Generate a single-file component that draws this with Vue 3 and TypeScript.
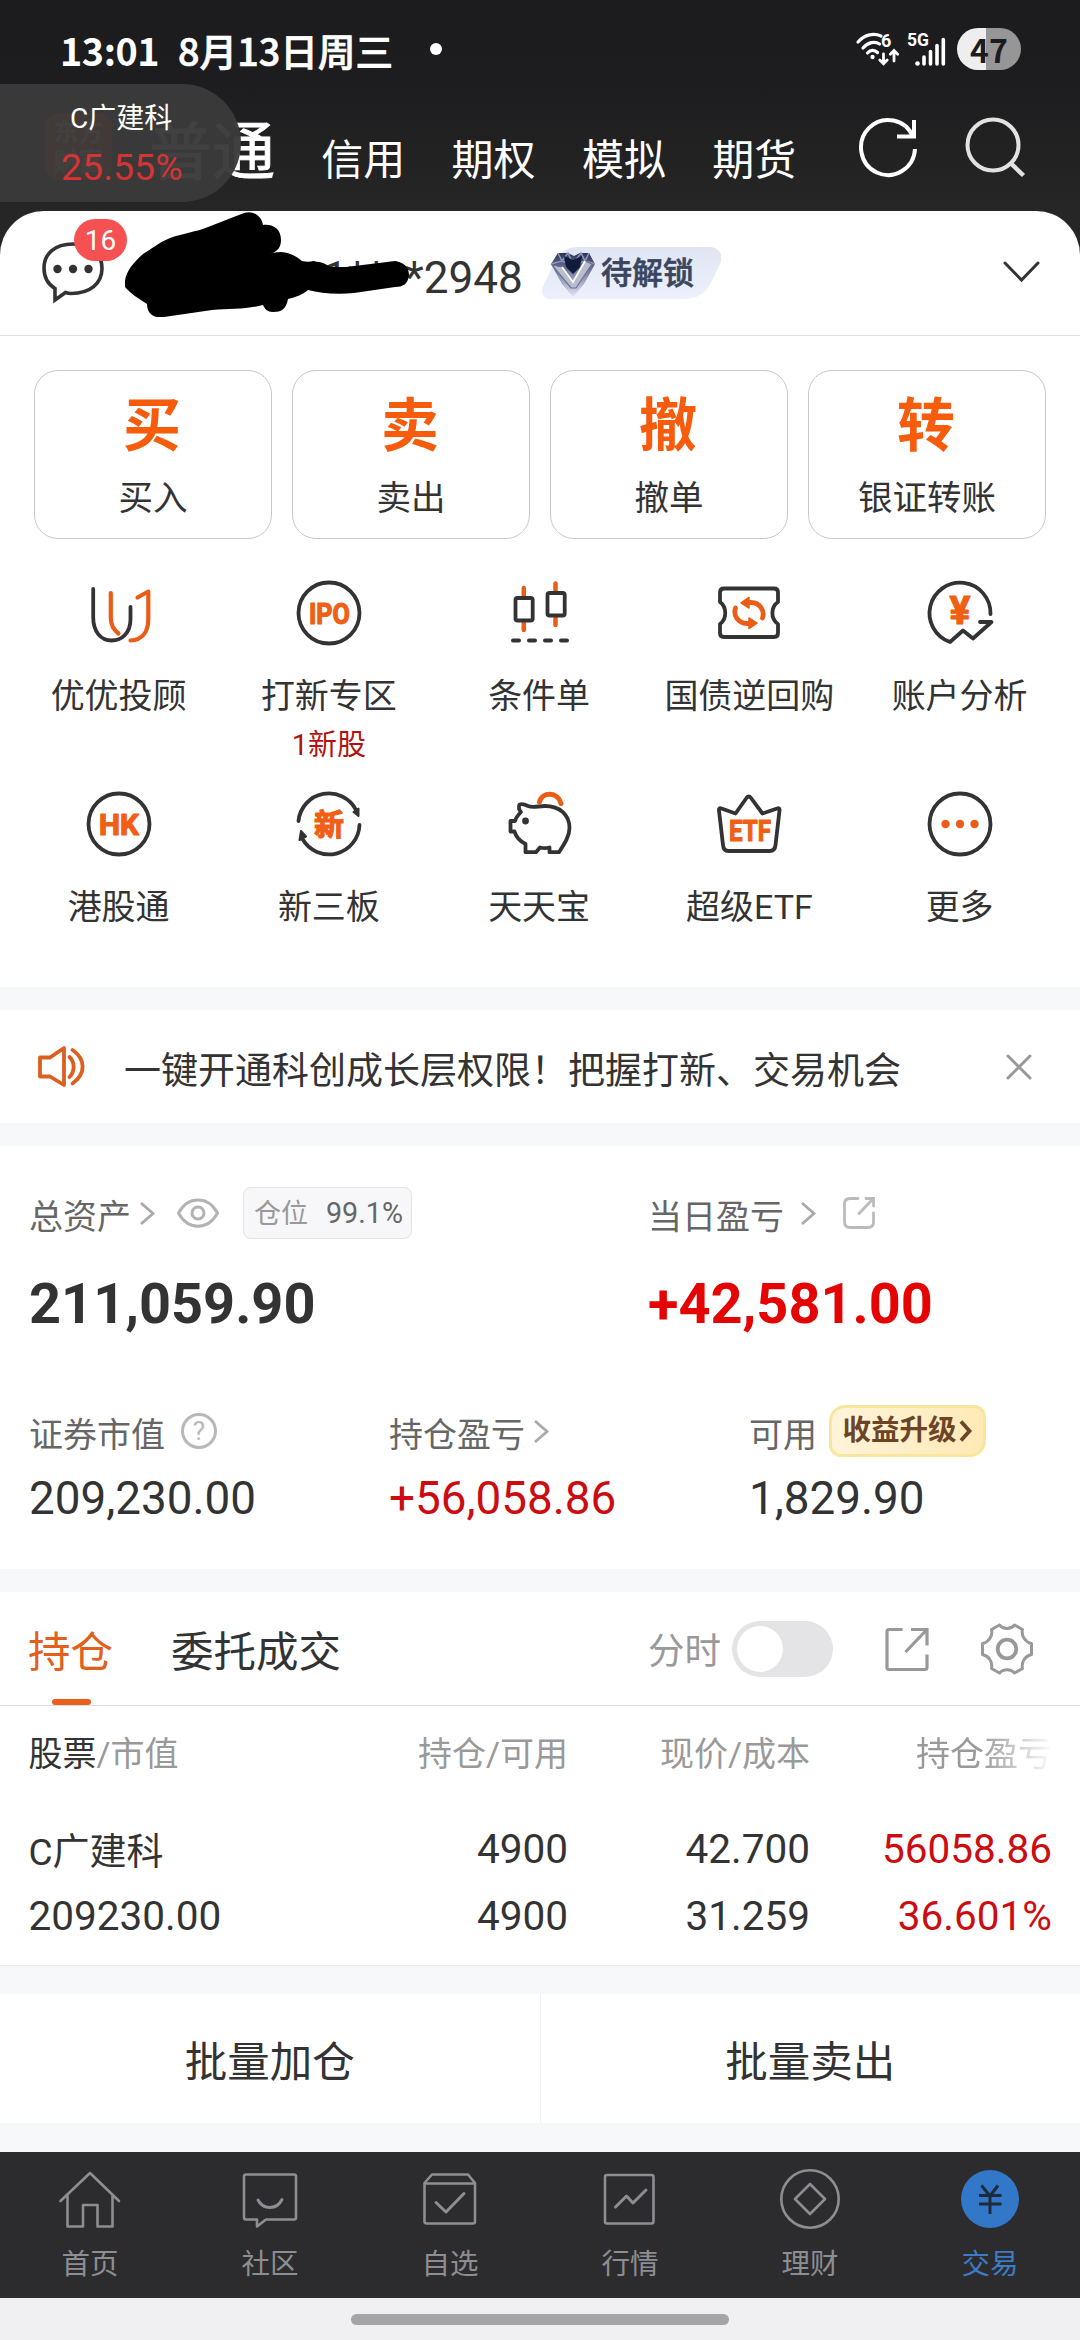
<script setup lang="ts">
interface Shortcut {
  key: string
  label: string
  note?: string
}

const accountTabs: string[] = ['信用', '期权', '模拟', '期货']

const mainActions: { glyph: string; label: string }[] = [
  { glyph: '买', label: '买入' },
  { glyph: '卖', label: '卖出' },
  { glyph: '撤', label: '撤单' },
  { glyph: '转', label: '银证转账' },
]

const shortcuts: Shortcut[] = [
  { key: 'advisor', label: '优优投顾' },
  { key: 'ipo', label: '打新专区', note: '1新股' },
  { key: 'condition', label: '条件单' },
  { key: 'repo', label: '国债逆回购' },
  { key: 'analysis', label: '账户分析' },
  { key: 'hk', label: '港股通' },
  { key: 'neeq', label: '新三板' },
  { key: 'pig', label: '天天宝' },
  { key: 'etf', label: '超级ETF' },
  { key: 'more', label: '更多' },
]

const navItems: { key: string; label: string; active?: boolean }[] = [
  { key: 'home', label: '首页' },
  { key: 'community', label: '社区' },
  { key: 'watch', label: '自选' },
  { key: 'market', label: '行情' },
  { key: 'wealth', label: '理财' },
  { key: 'trade', label: '交易', active: true },
]
</script>

<template>
  <div class="screen" lang="zh-CN">
    <header class="top">
      <div class="status">
        <span class="clock">13:01</span>
        <span class="date">8月13日周三</span>
        <i class="dot"></i>
        <svg class="signals" width="94" height="40" viewBox="0 0 94 40" fill="none" stroke="#fff" stroke-linecap="round">
          <path d="M3 13C10 5 19 4 26 7" stroke-width="3.2" />
          <path d="M8 19C13 13 20 12 24.500 15" stroke-width="3.200" />
          <path d="M12.500 24C15.500 20.500 19.500 20.500 22.500 23.500" stroke-width="3.200" />
          <circle cx="17.500" cy="28" r="2.200" fill="#fff" stroke="none" />
          <path d="M28.500 25V34M24.800 31L28.500 34.800L32.200 31M39 32V22M35.300 25.200L39 21.500L42.700 25.200" stroke-width="2.800" />
          <text x="26" y="18" class="sig-text" font-size="18">6</text>
          <text x="52" y="17" class="sig-text" font-size="18" textLength="22" lengthAdjust="spacingAndGlyphs">5G</text>
          <path d="M69 28V35M75.500 22.500V35M82 16.500V35M88.300 10.500V35" stroke-width="3.600" />
          <circle cx="62.500" cy="34.500" r="2.300" fill="#fff" stroke="none" />
        </svg>
        <span class="battery">47</span>
      </div>
      <nav class="modes">
        <span class="brand"><b>东方</b><b>财富</b></span>
        <span class="mode-main">普通</span>
        <span v-for="tab in accountTabs" :key="tab" class="mode">{{ tab }}</span>
        <svg class="refresh" width="64" height="64" viewBox="0 0 64 64" fill="none" stroke="#fff" stroke-width="4">
          <path d="M59 34A27 27.500 0 1 1 57 22" />
          <path d="M58 5V21.500H41" />
        </svg>
        <svg class="search" width="64" height="64" viewBox="0 0 64 64" fill="none" stroke="#e2e2e2" stroke-width="4">
          <circle cx="30" cy="29" r="25.500" />
          <path d="M47.500 47L60.500 59.500" stroke-width="4.500" />
        </svg>
      </nav>
      <div class="floating">
        <span class="floating-name">C广建科</span>
        <span class="floating-rate">25.55%</span>
      </div>
    </header>

    <main class="panel">
      <section class="account">
        <span class="chat">
          <svg width="66" height="66" viewBox="0 0 66 66" fill="none" stroke="#333" stroke-width="3.600">
            <path d="M15 49.500C7.500 45 4 37.500 4 29C4 14.500 15 5 33 5S62 14.500 62 29.500S50 54.500 31 54.500C29 54.500 27 54 25.500 53.500L15 61Z" stroke-linejoin="miter" />
            <g fill="#333" stroke="none">
              <circle cx="17.500" cy="30" r="4.200" /><circle cx="33" cy="30" r="4.200" /><circle cx="48.500" cy="30" r="4.200" />
            </g>
          </svg>
          <em class="unread">16</em>
        </span>
        <span class="number">*1****2948
          <svg class="scribble" width="286" height="106" viewBox="0 0 286 106">
            <path d="M1 70C2 60 10 51 19 43C28 38 32 33 46 27C60 22 72 21 84 16L120 2C130 -1 138 6 139 14C148 13 157 17 157 29C157 38 152 41 144 44C154 39 166 40 178 50C186 52 194 48 203 54L207 56H222L263 51C276 48 285 54 285 64C284 73 279 76 271 76L230 82C212 84 196 82 184 79C178 84 172 86 164 88C162 98 158 101 149 101C143 101 141 98 139 94C125 98 106 98 88 99L40 106C28 108 23 101 23 93C15 88 6 82 1 76Z" />
          </svg>
        </span>
        <span class="unlock">
          <svg class="unlock-bg" width="180" height="52" viewBox="0 0 180 52">
            <defs>
              <linearGradient id="unlockFill" x1="0" y1="0" x2="0" y2="1">
                <stop offset="0" stop-color="#dfe5f2" /><stop offset="1" stop-color="#edf1fd" />
              </linearGradient>
              <linearGradient id="gem" x1="0" y1="0" x2="0" y2="1">
                <stop offset="0" stop-color="#2b3553" /><stop offset=".55" stop-color="#8d94b8" /><stop offset="1" stop-color="#e6e6f0" />
              </linearGradient>
            </defs>
            <path d="M38 0H168C178 0 183 8 179 17L171 34C165 46 157 52 142 52H10C1 52 -1 45 3 37L14 15C19 5 26 0 38 0Z" fill="url(#unlockFill)" />
            <path d="M17 6H27L33 9L39 6H48L54 17L43 37L32 50L21 37L10 17Z" fill="url(#gem)" />
            <path d="M17 6L21 14L27 6L32 17L40 6L44 14L48 6M10 17L21 14L32 18L44 14L54 17" fill="none" stroke="#8a97bd" stroke-width="1.500" />
            <path d="M23 9L32 13L41 9L39 20L32 27L25 20Z" fill="#101b3c" />
            <path d="M11 18L21 20L32 35L44 14L51 17L35 41H30Z" fill="#b9bccb" stroke="#6a7193" stroke-width="1.200" />
            <path d="M21 20L32 35L44 14" fill="none" stroke="#fff" stroke-width="1.800" />
          </svg>
          <b>待解锁</b>
        </span>
        <svg class="expand" width="40" height="28" viewBox="0 0 40 28" fill="none" stroke="#333" stroke-width="3" stroke-linecap="round">
          <path d="M4 5L20.500 22L37 5" />
        </svg>
      </section>

      <section class="actions">
        <button v-for="a in mainActions" :key="a.glyph" class="action">
          <strong>{{ a.glyph }}</strong>
          <span>{{ a.label }}</span>
        </button>
      </section>

      <section class="shortcuts">
        <div v-for="s in shortcuts" :key="s.key" class="shortcut">
          <svg class="icon" width="72" height="72" viewBox="0 0 72 72" fill="none" stroke="#333" stroke-width="3.800" stroke-linecap="round" stroke-linejoin="round">
            <template v-if="s.key === 'advisor'">
              <path d="M10.200 12V40C10.200 55 18 63.500 28.500 63.500S47.500 56 47.500 42V30" />
              <path class="o" d="M27.800 16V41C27.800 48 31 53 35.500 56.500" stroke-width="4.200" />
              <path class="o" d="M47.500 63.500C60 63 65.300 54 65.300 42V14.500L54.500 20.500" stroke-width="4.200" />
            </template>
            <template v-else-if="s.key === 'ipo'">
              <circle cx="36" cy="36" r="30.500" />
              <text class="ot" x="16" y="46.500" font-size="29" textLength="41" lengthAdjust="spacingAndGlyphs">IPO</text>
            </template>
            <template v-else-if="s.key === 'condition'">
              <path class="o" d="M20.800 11V19M20.800 46V53M52.500 6.500V14M52.500 41V48" stroke-width="4.500" />
              <rect x="12.500" y="21" width="17.200" height="22.500" rx="2" />
              <rect x="44.500" y="16" width="17.200" height="22.500" rx="2" />
              <path d="M10 63.500H16M26 63.500H32M42 63.500H48M58 63.500H64" stroke-width="4" />
            </template>
            <template v-else-if="s.key === 'repo'">
              <path d="M11 11.500H61Q65 11.500 65 15.500V25C57.500 30 57.500 42 65 47V56Q65 60 61 60H11Q7 60 7 56V47C14 42 14 30 7 25V15.500Q7 11.500 11 11.500Z" />
              <path class="o" d="M22.500 31C20 38 25 46.500 34 46.500H37M49.500 41C52 34 47 25.500 38 25.500H35" stroke-width="4.800" />
              <path d="M28 25.800L36 20.500V31ZM44 46.200L36 41V51.500Z" fill="#ea5d17" class="o" stroke-width="1.500" />
            </template>
            <template v-else-if="s.key === 'analysis'">
              <path d="M66.500 37A30.500 30.500 0 1 0 26 65L39 53.500L49 61.500L67.500 45H56" />
              <text class="ot yen" x="36" y="47" font-size="39" text-anchor="middle">¥</text>
            </template>
            <template v-else-if="s.key === 'hk'">
              <circle cx="36" cy="36" r="30.500" />
              <text class="ot" x="16" y="46.500" font-size="29" textLength="40" lengthAdjust="spacingAndGlyphs">HK</text>
            </template>
            <template v-else-if="s.key === 'neeq'">
              <path d="M5.500 33A30.500 30.500 0 0 1 63 22M66.500 37A30.500 30.500 0 0 1 9.500 51" />
              <path d="M60.500 24L65.500 20.500V28ZM6.500 52L8 43L13 48.500Z" fill="#333" stroke-width="2" />
              <text class="ot cjk" x="36" y="46.500" font-size="30" text-anchor="middle">新</text>
            </template>
            <template v-else-if="s.key === 'pig'">
              <path d="M25 18C30 20 35 18 42 18C57 18 66.500 27 66.500 40C66.500 48 62 55 56 64.200H46.500V59.500C42 60.500 39 60 37 59.500L33 64.200H22.500V56C16.500 53 13 49 11.500 43.500H7.500V33H12C13 29 15 27 18 24C16 22 15.500 19 16.500 16.500C19 15.800 22 16.500 25 18Z" />
              <path class="o" d="M36.500 14C39 3.500 55 3.500 58 15.500" stroke-width="5" />
              <circle cx="22.500" cy="33" r="3.400" fill="#333" stroke="none" />
            </template>
            <template v-else-if="s.key === 'etf'">
              <path d="M6 22.500Q5.500 19.500 8.500 20.500L22.500 25.500L33.500 10Q35.800 7 38 10L49.500 25.500L64 20.500Q67 19.500 66.500 22.500L62.500 57Q62 63 56.500 63H15.500Q10.500 63 10 57Z" />
              <text class="ot" x="16" y="52.500" font-size="29.500" textLength="42" lengthAdjust="spacingAndGlyphs">ETF</text>
            </template>
            <template v-else>
              <circle cx="36" cy="36" r="30.500" />
              <g fill="#ea5d17" stroke="none"><circle cx="21.500" cy="36" r="4.200" /><circle cx="36" cy="36" r="4.200" /><circle cx="50.500" cy="36" r="4.200" /></g>
            </template>
          </svg>
          <span class="shortcut-label">{{ s.label }}</span>
          <small v-if="s.note">{{ s.note }}</small>
        </div>
      </section>
    </main>

    <section class="notice">
      <svg width="50" height="46" viewBox="0 0 50 46" fill="none" stroke="#dd5f20" stroke-width="3.800" stroke-linejoin="round" stroke-linecap="round">
        <path d="M4 13.500H14L28 4V41L14 32.500H4Z" />
        <path d="M33.500 13C39 18 39 27 33.500 33M36.500 6C50 15 50 30 36.500 39.500" />
      </svg>
      <span>一键开通科创成长层权限！把握打新、交易机会</span>
      <svg class="close" width="30" height="30" viewBox="0 0 30 30" stroke="#999" stroke-width="3" stroke-linecap="round">
        <path d="M4 4L26 26M26 4L4 26" />
      </svg>
    </section>

    <section class="assets">
      <div class="asset-main">
        <div class="cell wide">
          <div class="cap">
            <span>总资产</span>
            <svg class="arrow" width="20" height="28" viewBox="0 0 20 28"><path d="M4 4L16 14.500L4 25" /></svg>
            <svg class="eye" width="44" height="32" viewBox="0 0 44 32" fill="none" stroke="#b3b3b3" stroke-width="3">
              <path d="M2.500 16C12 -1.500 32 -1.500 41.500 16C32 33.500 12 33.500 2.500 16Z" /><circle cx="22" cy="16" r="6" />
            </svg>
            <span class="position"><em>仓位</em>99.1%</span>
          </div>
          <div class="total">211,059.90</div>
        </div>
        <div class="cell">
          <div class="cap">
            <span>当日盈亏</span>
            <svg class="arrow day" width="20" height="28" viewBox="0 0 20 28"><path d="M4 4L16 14.500L4 25" /></svg>
            <svg class="share" width="36" height="36" viewBox="0 0 36 36" fill="none" stroke="#bbb" stroke-width="2.800" stroke-linecap="round">
              <path d="M17 3.500H9Q3.500 3.500 3.500 9V27Q3.500 32.500 9 32.500H27Q32.500 32.500 32.500 27V18M25 3.500H32.500V11M32 4L18 18.500" />
            </svg>
          </div>
          <div class="total up">+42,581.00</div>
        </div>
      </div>
      <div class="asset-sub">
        <div class="cell third">
          <div class="cap">
            <span>证券市值</span>
            <span class="help">?</span>
          </div>
          <div class="value">209,230.00</div>
        </div>
        <div class="cell third">
          <div class="cap">
            <span>持仓盈亏</span>
            <svg class="arrow" width="20" height="28" viewBox="0 0 20 28"><path d="M4 4L16 14.500L4 25" /></svg>
          </div>
          <div class="value up">+56,058.86</div>
        </div>
        <div class="cell">
          <div class="cap">
            <span>可用</span>
            <span class="upgrade">收益升级<svg width="14" height="24" viewBox="0 0 14 24" fill="none" stroke="#6b4526" stroke-width="3.800"><path d="M2 2.500L10.500 12L2 21.500" /></svg></span>
          </div>
          <div class="value">1,829.90</div>
        </div>
      </div>
    </section>

    <section class="holdings">
      <div class="tabs">
        <span class="tab active">持仓<i></i></span>
        <span class="tab">委托成交</span>
        <span class="intraday">分时</span>
        <span class="toggle"><i></i></span>
        <svg class="open" width="48" height="48" viewBox="0 0 48 48" fill="none" stroke="#999" stroke-width="3.200">
          <path d="M19.500 4.500H6Q4 4.500 4 6.500V42.500Q4 44.500 6 44.500H42Q44 44.500 44 42.500V29.500M28 4.500H44V20.500M43.500 5L22.500 27" />
        </svg>
        <svg class="gear" width="54" height="54" viewBox="0 0 54 54" fill="none" stroke="#999" stroke-width="3" stroke-linejoin="round">
          <path d="M19.500 3C23 7.500 31 7.500 34.500 3L42.500 7.500C41 13.500 45 20 51.500 21.500V32.500C45 34 41 40.500 42.500 46.500L34.500 51C31 46.500 23 46.500 19.500 51L11.500 46.500C13 40.500 9 34 2.500 32.500V21.500C9 20 13 13.500 11.500 7.500Z" />
          <circle cx="27" cy="27" r="9.300" stroke-width="3.800" />
        </svg>
      </div>
      <div class="row head">
        <span class="c1"><b>股票</b>/市值</span>
        <span class="c2">持仓/可用</span>
        <span class="c3">现价/成本</span>
        <span class="c4 fade">持仓盈亏</span>
      </div>
      <div class="row first">
        <span class="c1 name">C广建科</span>
        <span class="c2">4900</span>
        <span class="c3">42.700</span>
        <span class="c4 up">56058.86</span>
      </div>
      <div class="row second">
        <span class="c1">209230.00</span>
        <span class="c2">4900</span>
        <span class="c3">31.259</span>
        <span class="c4 up">36.601%</span>
      </div>
    </section>

    <section class="batch">
      <button>批量加仓</button>
      <button>批量卖出</button>
    </section>

    <nav class="bottom">
      <div v-for="n in navItems" :key="n.key" class="nav-item" :class="{ active: n.active }">
        <svg width="64" height="64" viewBox="0 0 64 64" fill="none" stroke="#8e8e92" stroke-width="2.600" stroke-linejoin="round" stroke-linecap="round">
          <template v-if="n.key === 'home'">
            <path d="M2.500 34L32 6L61 34M9.500 28.500V59.500H25V38H39.500V59.500H54.500V28.500" />
          </template>
          <template v-else-if="n.key === 'community'">
            <path d="M8 7.500H56Q58 7.500 58 9.500V50.500Q58 52.500 56 52.500H28L19 59.500V52.500H8Q6 52.500 6 50.500V9.500Q6 7.500 8 7.500Z" />
            <path d="M20 33C25 43 39 43 44 32.500" stroke-width="3" />
          </template>
          <template v-else-if="n.key === 'watch'">
            <path d="M6.500 16V54.500Q6.500 56.500 8.500 56.500H55Q57 56.500 57 54.500V16L50 7.500H14ZM6.500 16.500H57" />
            <path d="M18 35.500L28 45L46 26.500" stroke-width="3" />
          </template>
          <template v-else-if="n.key === 'market'">
            <rect x="7" y="8" width="48.500" height="48.500" rx="2" />
            <path d="M17.500 40L28.500 29L35 36L48 23" stroke-width="3" />
          </template>
          <template v-else-if="n.key === 'wealth'">
            <circle cx="32" cy="32" r="28.700" />
            <path d="M32 17L47 32L32 47L17 32Z" />
          </template>
          <template v-else>
            <circle cx="32" cy="32" r="29" fill="#3277c8" stroke="none" />
            <path d="M23.500 18.500L32 29L40 18.500M21 28.500H43.500M21 37H43.500M32 28V47" stroke="#202a3a" stroke-width="3" stroke-linecap="butt" />
          </template>
        </svg>
        <span>{{ n.label }}</span>
      </div>
    </nav>
    <footer class="gesture"><i></i></footer>
  </div>
</template>

<style>
body {
  margin: 0;
  background: #f7f8fa;
}
</style>

<style scoped>
* {
  box-sizing: border-box;
}
i,
em {
  font-style: normal;
}
button {
  appearance: none;
  border: 0;
  background: none;
  padding: 0;
  margin: 0;
  font: inherit;
  color: inherit;
}
svg {
  display: block;
  flex: none;
}
.screen {
  width: 1080px;
  height: 2340px;
  overflow: hidden;
  display: flex;
  flex-direction: column;
  background: #f7f8fa;
  color: #333;
  font-family: Roboto, 'Noto Sans CJK SC', sans-serif;
  font-weight: 400;
  white-space: nowrap;
}
.up {
  color: #cc0c10;
}

/* header */
.top {
  position: relative;
  flex: none;
  height: 255px;
  margin-bottom: -44px;
  background: linear-gradient(#1c1c1e 0, #1d1d1f 84px, #262626 211px);
  color: #fff;
}
.status {
  height: 84px;
  display: flex;
  align-items: center;
  padding: 14px 59px 0 60px;
  font-family: 'Noto Sans CJK SC', sans-serif;
  font-weight: 700;
  font-size: 37.700px;
  line-height: 44px;
}
.clock {
  width: 118px;
  padding-top: 2px;
  letter-spacing: -0.400px;
}
.date {
  width: 252px;
  padding-top: 2px;
  font-weight: 500;
  -webkit-text-stroke: 0.700px #fff;
}
.dot {
  width: 12px;
  height: 12px;
  border-radius: 50%;
  background: #fff;
}
.signals {
  margin: 0 0 0 413px;
}
.sig-text {
  fill: #fff;
  stroke: none;
  font-family: Roboto, sans-serif;
  font-weight: 700;
}
.battery {
  flex: none;
  width: 64px;
  height: 42px;
  margin-left: 8px;
  border-radius: 21px;
  background: linear-gradient(90deg, #eee 29px, #969696 29px);
  color: #1c1c1e;
  font: 700 32px/42px 'Noto Sans CJK SC', sans-serif;
  text-align: center;
}
.modes {
  height: 127px;
  display: flex;
  align-items: flex-start;
  padding-left: 45px;
}
.brand {
  width: 67px;
  height: 67px;
  margin-top: 29px;
  border-radius: 14px;
  background: #e8421f;
  display: flex;
  flex-direction: column;
  align-items: center;
  justify-content: center;
  font-size: 25px;
  line-height: 29px;
}
.mode-main {
  margin: 34px 0 0 37px;
  font-size: 63px;
  line-height: 70px;
  font-weight: 400;
  -webkit-text-stroke: 0.900px #fff;
}
.mode {
  width: 84px;
  margin: 52px 0 0 46.300px;
  font-size: 42px;
  line-height: 50px;
}
.refresh {
  margin: 31px 0 0 60px;
}
.search {
  margin: 32px 0 0 43px;
}
.floating {
  position: absolute;
  left: 0;
  top: 84px;
  width: 241px;
  height: 118px;
  padding: 17px 0 0 0;
  border-radius: 0 59px 59px 0;
  background: rgba(58, 58, 58, 0.965);
  display: flex;
  flex-direction: column;
}
.floating-name {
  padding-left: 70px;
  font-size: 28px;
  line-height: 36px;
}
.floating-rate {
  padding-left: 61px;
  margin-top: 8px;
  font-size: 37.500px;
  line-height: 44px;
  color: #d53434;
}

/* account panel */
.panel {
  position: relative;
  flex: none;
  height: 776px;
  border-radius: 44px 44px 0 0;
  background: #fff;
}
.account {
  height: 125px;
  display: flex;
  align-items: flex-start;
  padding-left: 40px;
  border-bottom: 1px solid #dedede;
}
.chat {
  position: relative;
  width: 66px;
  margin-top: 28px;
}
.unread {
  position: absolute;
  left: 34px;
  top: -20px;
  width: 53px;
  height: 42px;
  border-radius: 21px;
  background: #f55152;
  color: #fff;
  font-size: 28px;
  line-height: 44px;
  text-align: center;
}
.number {
  position: relative;
  width: 220px;
  margin: 41px 0 0 198px;
  font-size: 44.100px;
  line-height: 52px;
}
.scribble {
  position: absolute;
  left: -180px;
  top: -41px;
}
.unlock {
  position: relative;
  width: 180px;
  height: 52px;
  margin: 36px 0 0 17px;
}
.unlock-bg {
  position: absolute;
  inset: 0;
}
.unlock b {
  position: relative;
  display: block;
  padding-left: 60px;
  font-size: 31px;
  line-height: 54px;
  font-weight: 500;
  -webkit-text-stroke: 0.600px #3b4560;
  color: #3b4560;
}
.expand {
  margin: 47px 0 0 280px;
}
.actions {
  display: flex;
  gap: 20.500px;
  padding: 34px 34px 0 34.300px;
}
.action {
  width: 237.500px;
  height: 169px;
  border: 1px solid #c9c9c9;
  border-radius: 24px;
  display: flex;
  flex-direction: column;
  align-items: center;
}
.action strong {
  margin-top: 22px;
  margin-right: 2px;
  font-size: 58px;
  line-height: 66px;
  font-weight: 700;
  color: #f75c0c;
}
.action span {
  margin-top: 18px;
  font-size: 34.500px;
  line-height: 42px;
}
.shortcuts {
  display: grid;
  grid-template-columns: repeat(5, 210.250px);
  grid-auto-rows: 210.500px;
  padding: 38px 0 0 13.500px;
}
.shortcut {
  display: flex;
  flex-direction: column;
  align-items: center;
}
.shortcut-label {
  margin-top: 26px;
  font-size: 34px;
  line-height: 42px;
}
.shortcut small {
  margin-top: 10px;
  font-size: 29px;
  line-height: 36px;
  color: #b3130f;
}
.o {
  stroke: #ea5d17;
}
.ot {
  fill: #f05f14;
  stroke: #f05f14;
  stroke-width: 1.200px;
  font-family: Roboto, sans-serif;
  font-weight: 700;
}
.cjk {
  font-family: 'Noto Sans CJK SC', sans-serif;
}

/* notice */
.notice {
  flex: none;
  height: 113px;
  margin-top: 23px;
  padding-left: 36px;
  display: flex;
  align-items: center;
  background: #fff;
}
.notice span {
  width: 790px;
  margin-left: 38px;
  padding-top: 10px;
  font-size: 37px;
  line-height: 44px;
}
.close {
  margin-left: 90px;
}

/* assets */
.assets {
  flex: none;
  height: 423px;
  margin-top: 23px;
  padding: 39px 0 0 29px;
  background: #fff;
}
.asset-main,
.asset-sub {
  display: flex;
}
.asset-sub {
  margin-top: 66px;
}
.wide {
  width: 619px;
}
.third {
  width: 360px;
}
.cap {
  height: 56px;
  display: flex;
  align-items: center;
  color: #666;
  font-size: 34px;
  line-height: 42px;
}
.cap > span:first-child {
  padding-top: 8px;
}
.arrow {
  margin-left: 6px;
  fill: none;
  stroke: #aaa;
  stroke-width: 2.800px;
}
.arrow.day {
  margin-left: 14px;
}
.eye {
  margin-left: 19px;
}
.position {
  width: 169px;
  height: 52px;
  margin-left: 23px;
  padding-left: 10px;
  border: 1px solid #e4e4e6;
  border-radius: 8px;
  background: #f7f7fa;
  font-size: 28.700px;
  line-height: 50px;
}
.position em {
  margin-right: 18px;
  font-size: 27px;
  color: #999;
}
.share {
  margin-left: 23px;
}
.total {
  margin-top: 30px;
  font-size: 55.900px;
  line-height: 66px;
  font-weight: 700;
}
.total.up {
  color: #e40404;
}
.help {
  width: 36px;
  height: 36px;
  margin-left: 16px;
  border: 3px solid #b8b8b8;
  border-radius: 50%;
  color: #b8b8b8;
  font-size: 26px;
  line-height: 31px;
  text-align: center;
}
.upgrade {
  width: 157px;
  height: 52px;
  margin-left: 12px;
  display: flex;
  align-items: center;
  justify-content: center;
  border: 3px solid #f7e79c;
  border-radius: 16px 12px 16px 12px;
  background: linear-gradient(100deg, #fff4dc, #ffe9b4);
  color: #6b4526;
  font-size: 28.500px;
  font-weight: 700;
}
.upgrade svg {
  margin-left: 2px;
}
.value {
  margin-top: 13px;
  font-size: 45.800px;
  line-height: 54px;
}

/* holdings */
.holdings {
  flex: none;
  height: 374px;
  margin-top: 23px;
  border-bottom: 1px solid #ececee;
  background: #fff;
}
.tabs {
  height: 114px;
  display: flex;
  align-items: center;
  padding-left: 28px;
  border-bottom: 1px solid #dcdcdc;
}
.tab {
  position: relative;
  margin-right: 58px;
  padding-top: 8px;
  font-size: 42.500px;
  line-height: 50px;
}
.tab.active {
  color: #e1601b;
}
.tab i {
  position: absolute;
  left: 24px;
  bottom: -27px;
  width: 39px;
  height: 6px;
  border-radius: 3px;
  background: #e9601a;
}
.intraday {
  width: 74px;
  margin-left: 249px;
  padding-top: 7px;
  font-size: 36.500px;
  line-height: 44px;
  color: #999;
}
.toggle {
  width: 101px;
  height: 56px;
  margin-left: 10px;
  padding: 5px;
  border-radius: 28px;
  background: #e4e4e6;
}
.toggle i {
  display: block;
  width: 46px;
  height: 46px;
  border-radius: 50%;
  background: #fff;
}
.open {
  margin-left: 50px;
}
.gear {
  margin-left: 49px;
}
.row {
  display: flex;
  padding-left: 28.500px;
  font-size: 40.500px;
  line-height: 48px;
}
.row.head {
  margin-top: 26px;
  font-size: 34px;
  line-height: 44px;
  color: #999;
}
.row.head b {
  font-weight: 400;
  color: #333;
}
.row.first {
  height: 52px;
  margin-top: 49px;
}
.row.second {
  margin-top: 15px;
}
.c1 {
  width: 300px;
}
.name {
  font-size: 37px;
  padding-top: 4px;
}
.c2 {
  width: 239.500px;
  text-align: right;
}
.c3 {
  width: 242px;
  text-align: right;
}
.c4 {
  width: 242px;
  text-align: right;
}
.fade {
  -webkit-mask-image: linear-gradient(90deg, #000 170px, transparent 245px);
  mask-image: linear-gradient(90deg, #000 170px, transparent 245px);
}

.batch {
  flex: none;
  display: flex;
  height: 129px;
  margin: 28px 0 29px;
  background: #fff;
}
.batch button {
  flex: 1;
  padding-top: 9px;
  font-size: 42.500px;
  line-height: 50px;
}
.batch button + button {
  border-left: 1px solid #f0f1f3;
}

/* bottom navigation */
.bottom {
  flex: none;
  height: 146px;
  display: flex;
  background: #2c2c2e;
}
.nav-item {
  flex: 1;
  display: flex;
  flex-direction: column;
  align-items: center;
  padding-top: 15px;
  color: #8e8e92;
  font-size: 28.500px;
  line-height: 36px;
}
.nav-item span {
  margin-top: 16px;
}
.nav-item.active {
  color: #3b7cc4;
}
.gesture {
  flex: none;
  height: 42px;
  display: flex;
  justify-content: center;
  padding-top: 16px;
  background: #f0f0f2;
}
.gesture i {
  width: 378px;
  height: 11px;
  border-radius: 6px;
  background: #a5a5a7;
}
</style>
